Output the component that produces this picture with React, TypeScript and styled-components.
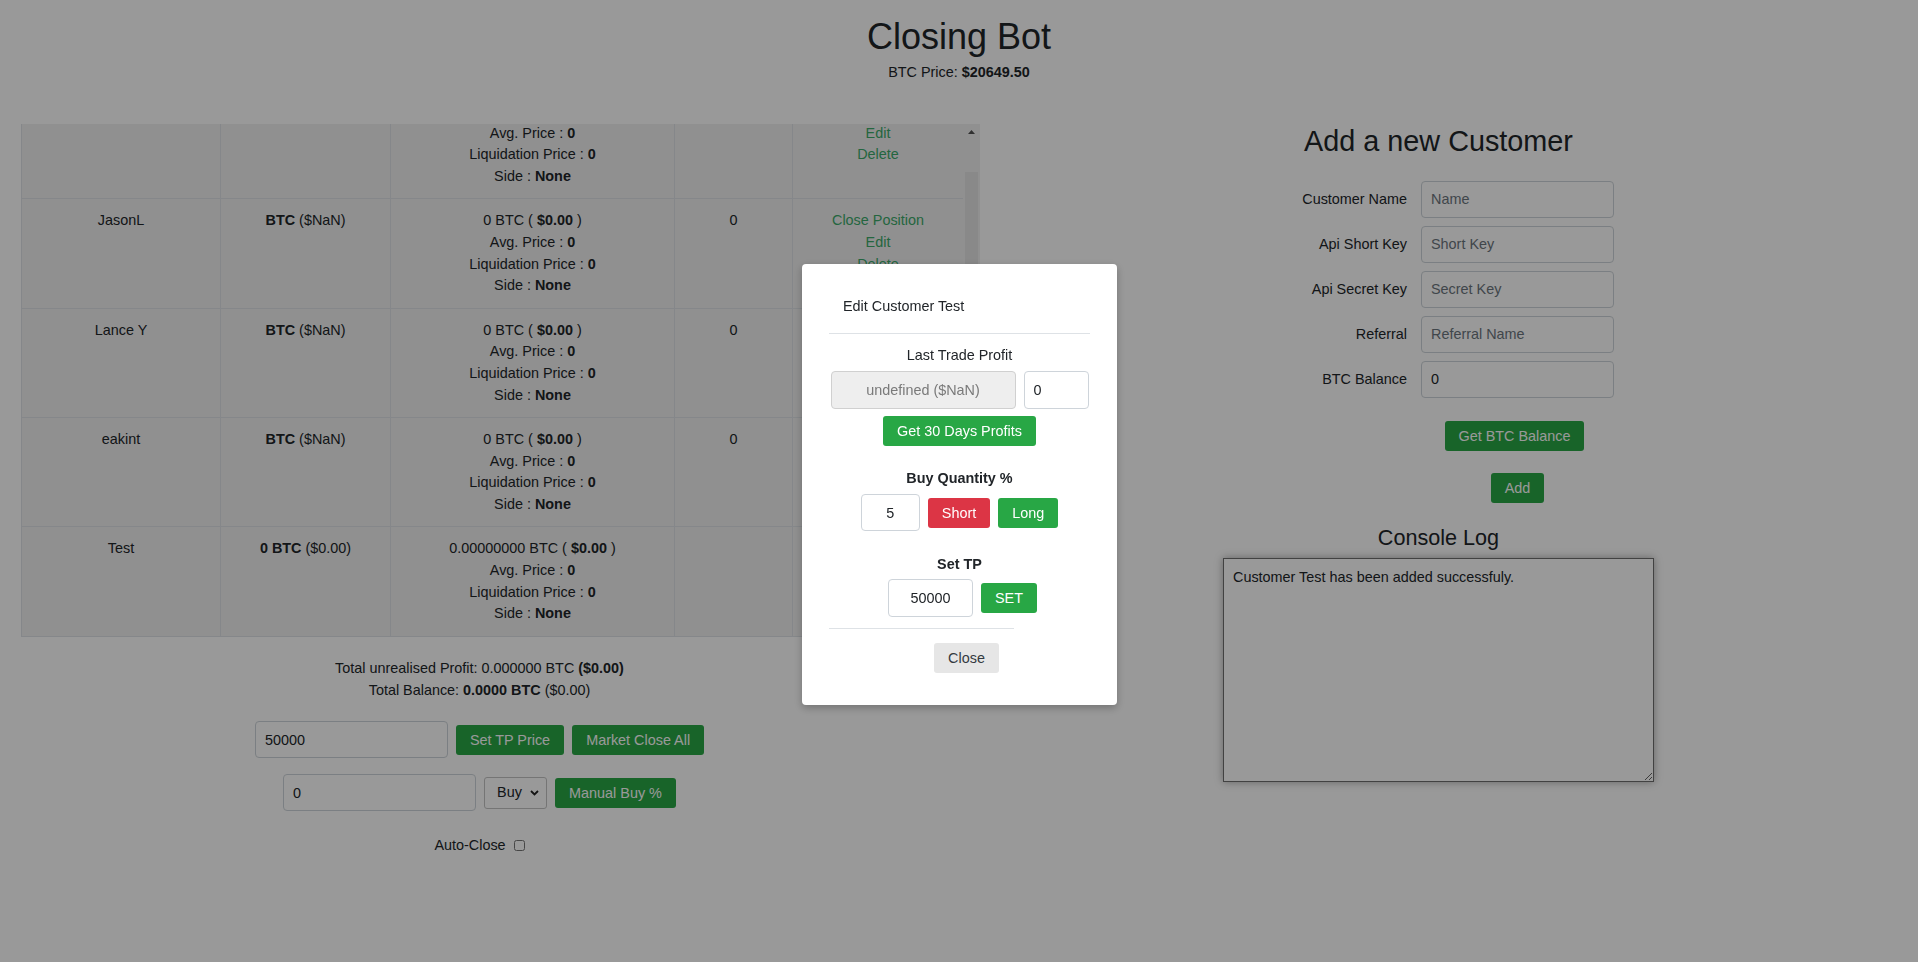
import React, { useCallback } from 'react';
import styled, { createGlobalStyle } from 'styled-components';

const GlobalStyle = createGlobalStyle`
  html, body { margin: 0; padding: 0; }
  body {
    font-family: "Liberation Sans", Arial, Helvetica, sans-serif;
    font-size: 14.4px;
    line-height: 1.5;
    color: #212529;
    background: #ffffff;
  }
  * { box-sizing: border-box; }
`;

const Page = styled.div`
  position: relative;
  min-height: 962px;
`;

const Header = styled.header`
  text-align: center;
  padding-top: 15px;
`;

const Title = styled.h1`
  margin: 0;
  font-size: 36px;
  line-height: 43.2px;
  font-weight: 400;
`;

const PriceLine = styled.p`
  margin: 3.5px 0 0;
  line-height: 21.6px;
`;

const Columns = styled.div`
  display: grid;
  grid-template-columns: 959px 959px;
  margin-top: 40.7px;
`;

const LeftCol = styled.section`
  display: flex;
  flex-direction: column;
  align-items: center;
`;

const TableFrame = styled.div`
  align-self: flex-start;
  margin-left: 21px;
  display: flex;
  height: 513px;
`;

const TableViewport = styled.div`
  width: 942px;
  height: 100%;
  overflow: hidden;
`;

const ScrollTrack = styled.div`
  width: 17px;
  height: 100%;
  display: flex;
  flex-direction: column;
  background: #f1f1f1;
`;

const ScrollButton = styled.div`
  height: 17px;
  flex: none;
  display: flex;
  align-items: center;
  justify-content: center;
`;

const ScrollRail = styled.div`
  flex: 1;
  display: flex;
  flex-direction: column;
  justify-content: flex-end;
  padding: 0 2px;
`;

const ScrollThumb = styled.div`
  height: 93.6%;
  background: #e4e4e4;
`;

const Table = styled.table`
  width: 942px;
  table-layout: fixed;
  border-collapse: collapse;
  background: #f0f0f0;
`;

const Cell = styled.td`
  border: 1px solid #dee2e6;
  padding: 11px 10.8px;
  text-align: center;
  vertical-align: top;
  line-height: 21.6px;
`;

const Line = styled.div``;

const ActionLink = styled.a`
  display: block;
  color: #3caa6a;
  text-decoration: none;
  cursor: pointer;
`;

const Totals = styled.div`
  margin-top: 21px;
  text-align: center;
  line-height: 21.6px;
`;

const ControlRow = styled.div<{ $mt: number }>`
  display: flex;
  align-items: center;
  justify-content: center;
  gap: 8px;
  margin-top: ${(p) => p.$mt}px;
`;

const TextInput = styled.input<{ $w: number; $h?: number; $center?: boolean }>`
  width: ${(p) => p.$w}px;
  height: ${(p) => p.$h ?? 37}px;
  border: 1px solid #ced4da;
  border-radius: 4px;
  padding: 0 ${(p) => (p.$center ? 4 : 9)}px;
  font: inherit;
  font-size: 14.4px;
  color: #212529;
  background: #fff;
  text-align: ${(p) => (p.$center ? 'center' : 'left')};
  outline: none;

  &::placeholder { color: #6c757d; }
  &:disabled {
    background: #eeeeee;
    border-color: #d0d0d0;
    color: #7a7a7a;
  }
`;

const Button = styled.button<{ $variant?: 'success' | 'danger' | 'light' }>`
  height: 30px;
  padding: 0 14px;
  border: 0;
  border-radius: 3px;
  font: inherit;
  font-size: 14.4px;
  line-height: 30px;
  white-space: nowrap;
  cursor: pointer;
  color: ${(p) => (p.$variant === 'light' ? '#343a40' : '#ffffff')};
  background: ${(p) =>
    p.$variant === 'danger' ? '#dc3545' : p.$variant === 'light' ? '#e6e6e6' : '#28a745'};
`;

const SelectWrap = styled.div`
  position: relative;
  width: 63px;
  height: 32px;
`;

const Select = styled.select`
  appearance: none;
  width: 100%;
  height: 100%;
  border: 1px solid #c4c4c4;
  border-radius: 3px;
  background: #fff;
  padding: 0 0 0 12px;
  font: inherit;
  font-size: 14.4px;
  color: #212529;
  outline: none;
`;

const Chevron = styled.svg`
  position: absolute;
  right: 8px;
  top: 13px;
  pointer-events: none;
`;

const AutoClose = styled.label`
  margin-top: 24px;
  display: flex;
  align-items: center;
  gap: 8px;
  line-height: 21.6px;
`;

const CheckBox = styled.input`
  margin: 0;
  width: 11px;
  height: 11px;
`;

const RightCol = styled.section`
  display: flex;
  flex-direction: column;
  align-items: center;
`;

const FormTitle = styled.h2`
  margin: 0 0 22.4px;
  font-size: 28.8px;
  line-height: 34.56px;
  font-weight: 400;
`;

const FormGrid = styled.div`
  display: grid;
  grid-template-columns: 144px 193px;
  column-gap: 14px;
  row-gap: 8px;
`;

const FieldLabel = styled.label`
  align-self: center;
  text-align: right;
  line-height: 21.6px;
`;

const FormAction = styled.div<{ $mt: number; $shift?: number }>`
  grid-column: 2;
  justify-self: center;
  margin-top: ${(p) => p.$mt}px;
  margin-right: ${(p) => p.$shift ?? 0}px;
`;

const ConsoleTitle = styled.h4`
  margin: 22.3px 0 6.8px;
  font-size: 21.6px;
  line-height: 25.92px;
  font-weight: 400;
`;

const ConsoleBox = styled.textarea`
  width: 431px;
  height: 224px;
  border: 1px solid #6e6e6e;
  padding: 8px 9px;
  font: inherit;
  font-size: 14.4px;
  line-height: 21.6px;
  color: #212529;
  background: #fff;
  box-shadow: 0 0 8px rgba(0, 0, 0, 0.35);
  resize: both;
  outline: none;
`;

const Backdrop = styled.div`
  position: fixed;
  inset: 0;
  background: rgba(0, 0, 0, 0.4);
  z-index: 10;
`;

const Modal = styled.div`
  position: fixed;
  top: 264px;
  left: 50%;
  width: 315px;
  margin-left: -157px;
  background: #ffffff;
  border-radius: 4px;
  box-shadow: 0 3px 9px rgba(0, 0, 0, 0.25);
  padding: 32px 27px;
  z-index: 11;
  text-align: center;
`;

const ModalTitle = styled.div`
  text-align: left;
  padding-left: 14px;
  line-height: 21.6px;
`;

const Divider = styled.hr<{ $w?: number; $mt: number; $mb: number }>`
  border: 0;
  border-top: 1px solid #dee2e6;
  margin: ${(p) => p.$mt}px 0 ${(p) => p.$mb}px;
  width: ${(p) => (p.$w ? `${p.$w}px` : '100%')};
`;

const Caption = styled.div<{ $bold?: boolean; $mt?: number }>`
  line-height: 21.6px;
  font-weight: ${(p) => (p.$bold ? 700 : 400)};
  margin-top: ${(p) => p.$mt ?? 0}px;
`;

const ModalRow = styled.div<{ $mt: number; $shift?: number }>`
  display: flex;
  align-items: center;
  justify-content: center;
  gap: 8px;
  margin-top: ${(p) => p.$mt}px;
  padding-left: ${(p) => p.$shift ?? 0}px;
`;

type Customer = {
  name: string;
  balance: React.ReactNode;
  amount: string;
  profit: string;
};

const customers: Customer[] = [
  { name: 'DaveM', balance: <><b>BTC</b> ($NaN)</>, amount: '0', profit: '0' },
  { name: 'JasonL', balance: <><b>BTC</b> ($NaN)</>, amount: '0', profit: '0' },
  { name: 'Lance Y', balance: <><b>BTC</b> ($NaN)</>, amount: '0', profit: '0' },
  { name: 'eakint', balance: <><b>BTC</b> ($NaN)</>, amount: '0', profit: '0' },
  { name: 'Test', balance: <><b>0 BTC</b> ($0.00)</>, amount: '0.00000000', profit: '' },
];

const colWidths = [199, 170, 284, 118, 171];

export default function App() {
  const scrollRef = useCallback((el: HTMLDivElement | null) => {
    if (el) el.scrollTop = el.scrollHeight;
  }, []);

  return (
    <Page>
      <GlobalStyle />
      <Header>
        <Title>Closing Bot</Title>
        <PriceLine>
          BTC Price: <b>$20649.50</b>
        </PriceLine>
      </Header>

      <Columns>
        <LeftCol>
          <TableFrame>
            <TableViewport ref={scrollRef}>
              <Table>
                <colgroup>
                  {colWidths.map((w, i) => (
                    <col key={i} style={{ width: w }} />
                  ))}
                </colgroup>
                <tbody>
                  {customers.map((c) => (
                    <tr key={c.name}>
                      <Cell>{c.name}</Cell>
                      <Cell>{c.balance}</Cell>
                      <Cell>
                        <Line>
                          {c.amount} BTC ( <b>$0.00</b> )
                        </Line>
                        <Line>
                          Avg. Price : <b>0</b>
                        </Line>
                        <Line>
                          Liquidation Price : <b>0</b>
                        </Line>
                        <Line>
                          Side : <b>None</b>
                        </Line>
                      </Cell>
                      <Cell>{c.profit}</Cell>
                      <Cell>
                        <ActionLink>Close Position</ActionLink>
                        <ActionLink>Edit</ActionLink>
                        <ActionLink>Delete</ActionLink>
                      </Cell>
                    </tr>
                  ))}
                </tbody>
              </Table>
            </TableViewport>
            <ScrollTrack>
              <ScrollButton>
                <svg width="7" height="4" viewBox="0 0 7 4">
                  <path d="M0 4 L3.5 0 L7 4 Z" fill="#505050" />
                </svg>
              </ScrollButton>
              <ScrollRail>
                <ScrollThumb />
              </ScrollRail>
              <ScrollButton>
                <svg width="7" height="4" viewBox="0 0 7 4">
                  <path d="M0 0 L3.5 4 L7 0 Z" fill="#a3a3a3" />
                </svg>
              </ScrollButton>
            </ScrollTrack>
          </TableFrame>

          <Totals>
            <div>
              Total unrealised Profit: 0.000000 BTC <b>($0.00)</b>
            </div>
            <div>
              Total Balance: <b>0.0000 BTC</b> ($0.00)
            </div>
          </Totals>

          <ControlRow $mt={20}>
            <TextInput $w={193} defaultValue="50000" />
            <Button>Set TP Price</Button>
            <Button>Market Close All</Button>
          </ControlRow>

          <ControlRow $mt={16}>
            <TextInput $w={193} defaultValue="0" />
            <SelectWrap>
              <Select defaultValue="Buy">
                <option>Buy</option>
                <option>Sell</option>
              </Select>
              <Chevron width="9" height="6" viewBox="0 0 9 6">
                <path d="M1 1 L4.5 4.5 L8 1" fill="none" stroke="#222" strokeWidth="1.8" />
              </Chevron>
            </SelectWrap>
            <Button>Manual Buy %</Button>
          </ControlRow>

          <AutoClose>
            Auto-Close <CheckBox type="checkbox" />
          </AutoClose>
        </LeftCol>

        <RightCol>
          <FormTitle>Add a new Customer</FormTitle>
          <FormGrid>
            <FieldLabel>Customer Name</FieldLabel>
            <TextInput $w={193} placeholder="Name" />
            <FieldLabel>Api Short Key</FieldLabel>
            <TextInput $w={193} placeholder="Short Key" />
            <FieldLabel>Api Secret Key</FieldLabel>
            <TextInput $w={193} placeholder="Secret Key" />
            <FieldLabel>Referral</FieldLabel>
            <TextInput $w={193} placeholder="Referral Name" />
            <FieldLabel>BTC Balance</FieldLabel>
            <TextInput $w={193} defaultValue="0" />
            <FormAction $mt={15} $shift={6}>
              <Button>Get BTC Balance</Button>
            </FormAction>
            <FormAction $mt={14}>
              <Button>Add</Button>
            </FormAction>
          </FormGrid>
          <ConsoleTitle>Console Log</ConsoleTitle>
          <ConsoleBox readOnly defaultValue="Customer Test has been added successfuly." />
        </RightCol>
      </Columns>

      <Backdrop />
      <Modal>
        <ModalTitle>Edit Customer Test</ModalTitle>
        <Divider $mt={15} $mb={11.5} />
        <Caption>Last Trade Profit</Caption>
        <ModalRow $mt={4.2}>
          <TextInput $w={185} $h={38} $center disabled value="undefined ($NaN)" readOnly />
          <TextInput $w={65} $h={38} defaultValue="0" />
        </ModalRow>
        <ModalRow $mt={7.3}>
          <Button>Get 30 Days Profits</Button>
        </ModalRow>
        <Caption $bold $mt={22.2}>
          Buy Quantity %
        </Caption>
        <ModalRow $mt={4.2}>
          <TextInput $w={59} $center defaultValue="5" />
          <Button $variant="danger">Short</Button>
          <Button>Long</Button>
        </ModalRow>
        <Caption $bold $mt={23.2}>
          Set TP
        </Caption>
        <ModalRow $mt={3.2} $shift={6}>
          <TextInput $w={85} $h={38} $center defaultValue="50000" />
          <Button>SET</Button>
        </ModalRow>
        <Divider $w={185} $mt={11.3} $mb={13.7} />
        <ModalRow $mt={0} $shift={14}>
          <Button $variant="light">Close</Button>
        </ModalRow>
      </Modal>
    </Page>
  );
}
